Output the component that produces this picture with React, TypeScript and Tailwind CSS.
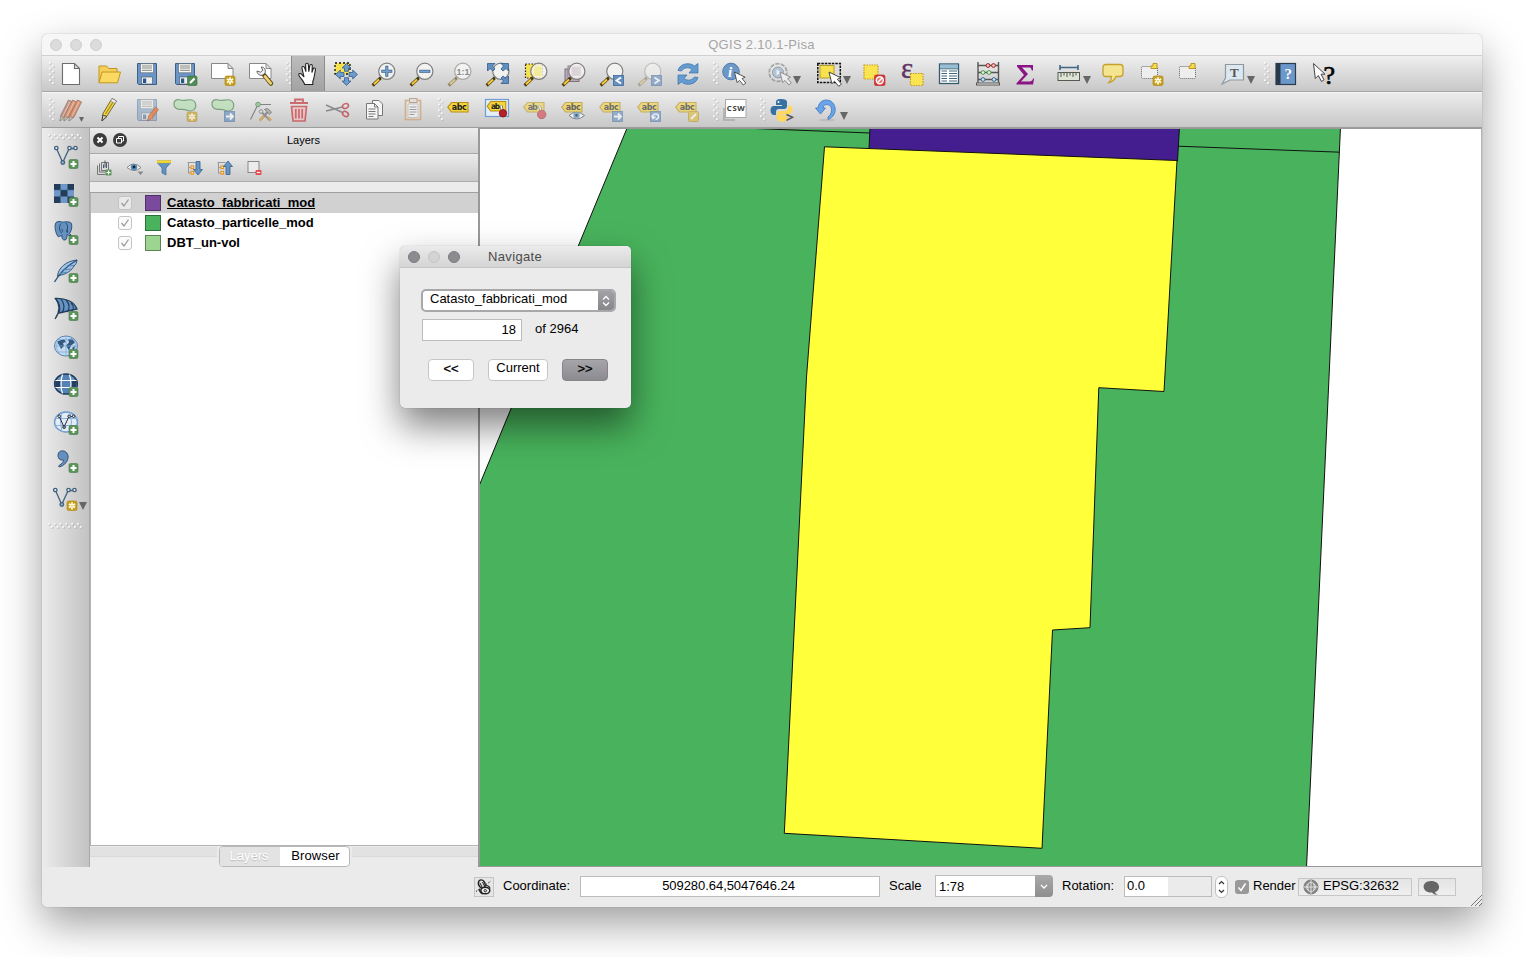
import React from "react";
import type { ReactNode } from "react";

type IconProps = { name: string; className?: string };

const Glass = ({ faded = false }: { faded?: boolean }) => (
  <g>
    <path d="M9.500 14.500 7.500 16.500" stroke={faded ? "#888" : "#333"} strokeWidth="2" />
    <path d="M7.500 17 1.800 22.400" stroke={faded ? "#8d8468" : "#4a3d12"} strokeWidth="3.2" strokeLinecap="square" />
    <path d="M7 17.500 2 22.200" stroke={faded ? "#dcc98a" : "#fbcb35"} strokeWidth="2" />
    <circle cx="14.800" cy="9.300" r="8.100" fill="#f6f6f4" fillOpacity="0.8" stroke={faded ? "#a8a8a8" : "#808080"} strokeWidth="1.2" />
  </g>
);

const Plus = () => (
  <g>
    <rect x="15" y="14.5" width="9" height="9" rx="1.5" fill="#5b955b" stroke="#447744" strokeWidth="0.6" />
    <path d="M19.5 16v6M16.5 19h6" stroke="#fff" strokeWidth="2" />
  </g>
);

const Star = () => (
  <g>
    <rect x="14" y="14" width="10" height="9.5" rx="1.6" fill="#c9a01f" stroke="#a9830f" strokeWidth="0.6" />
    <path d="M19 15.2v7.200M15.9 17l6.2 3.6M22.1 17l-6.2 3.6" stroke="#fffbe6" strokeWidth="1.7" />
    <circle cx="19" cy="18.8" r="0.800" fill="#d9b541" />
  </g>
);

const BlueBox = ({ children }: { children: ReactNode }) => (
  <g>
    <rect x="13.5" y="13.5" width="10" height="10" fill="#6690c2" stroke="#41699c" strokeWidth="0.8" />
    {children}
  </g>
);

const Cursor = ({ x = 12, y = 10 }: { x?: number; y?: number }) => (
  <path
    transform={`translate(${x} ${y})`}
    d="M0 0 2.6 10.6 5 8.4 8.8 13 11.3 11 7.6 6.6 10.6 5.2Z"
    fill="#fff"
    stroke="#444"
    strokeWidth="0.9"
  />
);

const Tag = ({ text = "abc" }: { text?: string }) => (
  <g>
    <path d="M0.800 9.200 4.500 4.500h16.500v9.500H4.500Z" fill="#f4d43c" stroke="#b78f13" strokeWidth="1.1" />
    <text x="4.800" y="12.200" fontSize="8" fontWeight="700" fontFamily="DejaVu Sans" textLength={text.length * 5} fill="#222">
      {text}
    </text>
  </g>
);

const Floppy = () => (
  <g>
    <path d="M2.5 1.5h19v21h-18l-1-1Z" fill="#6b95c6" stroke="#3e5f86" />
    <rect x="5.5" y="1.8" width="13" height="9" fill="#f7f7f3" stroke="#65717c" strokeWidth="0.7" />
    <path d="M7 4h10M7 6h10M7 8.3h10" stroke="#777" strokeWidth="0.9" />
    <rect x="6.5" y="15" width="11" height="7" fill="#eee" stroke="#456" strokeWidth="0.6" />
    <rect x="8" y="16.5" width="3.2" height="4.5" fill="#28558c" />
  </g>
);

const Blob = () => (
  <path d="M1 6.500C.5 2.500 3.500 1 7.500 2 11 3.500 15 .8 19 2c4 1.200 4.200 5 3.200 8-1.500 3.500-6 3.200-9 2-3-1-5-.2-8-.8C3 10.500 1.200 9 1 6.500Z" fill="#b3dfaf" stroke="#467f4d" strokeWidth="1.200" />
);

const Vector = ({ stroke = "#42617f" }: { stroke?: string }) => (
  <g fill="#e9eef3" stroke={stroke} strokeWidth="1.3">
    <path d="M2.5 3.5 8.7 17.5 15.2 3.5H20" fill="none" />
    <circle cx="2.3" cy="3" r="1.7" />
    <circle cx="8.8" cy="17.5" r="1.8" fill="#90afcf" />
    <circle cx="15.5" cy="3" r="1.7" />
    <circle cx="21.5" cy="3" r="1.7" />
  </g>
);

const icons: Record<string, ReactNode> = {
  file: <path d="M3.5 1.5h12l5 5v16h-17ZM15.5 1.5v5h5" fill="#fff" stroke="#6d6d6d" strokeWidth="1.1" />,
  folder: (
    <g stroke="#c3961d">
      <path d="M2 20.500V4h7.500L11.500 6.500H20V10" fill="#f5cf5a" />
      <path d="M2 20.800 5 10h18.500l-3 10.800Z" fill="#fad962" />
    </g>
  ),
  save: <Floppy />,
  saveAs: (
    <g>
      <Floppy />
      <rect x="14.5" y="14" width="9.5" height="9.5" rx="1.5" fill="#4f8b54" stroke="#336a3b" strokeWidth="0.6" />
      <path d="m17 21 4.5-4.5" stroke="#fff" strokeWidth="2.2" />
    </g>
  ),
  composer: (
    <g>
      <path d="M0.500 1.500H17l5 5v10H0.500ZM17 1.500v5h5" fill="#fff" stroke="#888" />
      <Star />
    </g>
  ),
  manager: (
    <g>
      <path d="M0.500 1.500H17l5 5v10H0.500ZM17 1.500v5h5" fill="#fff" stroke="#888" />
      <path d="m15 13 7 8.500" stroke="#5b4a16" strokeWidth="4.4" strokeLinecap="round" />
      <path d="m16 14.500 5.800 6.800" stroke="#efd272" strokeWidth="2.7" strokeLinecap="round" />
      <path d="M8 9c0 3.500 3.500 5 6 4l2-1.800c1-2.500 0-6.200-3.800-6.200l1.600 3.200-2.300 2Z" fill="#eee" stroke="#555" strokeWidth="0.9" />
    </g>
  ),
  hand: (
    <path
      d="M8.500 22.500c-.2-3-4.700-6.700-5.600-9.300-.5-1.800 1.500-2.300 2.800-.8L8 15 6 6.300c-.4-2 2-2.500 2.600-.6l1.300 4-.3-7c0-2 2.600-2 2.800 0l.4 6.900 1-6c.4-1.800 2.800-1.400 2.500.5l-.4 6.400 1.200-3.500c.6-1.700 2.700-1 2.300.8-.9 4.500-1.200 9-2.600 11.500v3.200Z"
      fill="#fff"
      stroke="#222"
      strokeWidth="1.1"
    />
  ),
  panSel: (
    <g>
      <rect x="1" y="1" width="15" height="11" fill="#f7e14f" stroke="#111" strokeWidth="1.3" strokeDasharray="2 2" />
      <path
        d="m12.500 1.500 4.500 4.500h-2.500v3.300h-4V6H8ZM12.500 23.500 17 19h-2.500v-3.300h-4V19H8ZM1.500 12.500l4.800-4.500v2.500H10v4H6.300V17ZM23.500 12.500l-4.800-4.500v2.500H15v4h3.700V17Z"
        fill="#6d9ccd"
        stroke="#365f8e"
        strokeWidth="0.8"
      />
    </g>
  ),
  zoomIn: (
    <g>
      <Glass />
      <path d="M14.800 3.800v11M9.300 9.300h11" stroke="#3c638f" strokeWidth="3" />
      <path d="M14.800 4.500v9.600M10 9.300h9.600" stroke="#76a2d2" strokeWidth="1.6" />
    </g>
  ),
  zoomOut: (
    <g>
      <Glass />
      <path d="M9.300 9.300h11" stroke="#3c638f" strokeWidth="3" />
      <path d="M10 9.300h9.600" stroke="#76a2d2" strokeWidth="1.6" />
    </g>
  ),
  zoomNative: (
    <g>
      <Glass faded />
      <text x="8.500" y="12.500" fontSize="9" fontWeight="700" fontFamily="Liberation Sans" fill="#8a8a8a">1:1</text>
    </g>
  ),
  zoomFull: (
    <g>
      <Glass />
      <path d="M1.500 1.500H9L6.500 4 9 7 7 9 4 6.500 1.500 9ZM22.500 1.500H15L17.500 4 15 7l2 2 3-2.500 2.500 2.500ZM22.500 21.500H15l2.500-2.500L15 16l2-2 3 2.500 2.500-2.500Z" fill="#618fc1" stroke="#315a8b" strokeWidth="0.8" />
    </g>
  ),
  zoomSel: (
    <g>
      <rect x="1.500" y="2" width="17" height="14" fill="#f7e14f" stroke="#222" strokeWidth="1.2" strokeDasharray="1.5 1.5" />
      <Glass />
      <path d="M11 4.500h6.500v9.500H9.500Z" fill="#f1e88c" opacity="0.8" />
    </g>
  ),
  zoomLayer: (
    <g>
      <rect x="3" y="7" width="14" height="12.500" fill="#b9a8ba" stroke="#81717f" />
      <rect x="6" y="4" width="13" height="12" fill="#d4c8d4" stroke="#93818f" />
      <Glass />
      <rect x="9.500" y="5" width="9" height="9" fill="#d6cbd5" opacity="0.8" />
    </g>
  ),
  zoomLast: (
    <g>
      <Glass />
      <BlueBox><path d="m21 15.500-4.500 3 4.500 3" stroke="#fff" strokeWidth="1.8" fill="none" /></BlueBox>
    </g>
  ),
  zoomNext: (
    <g opacity="0.6">
      <Glass faded />
      <BlueBox><path d="m16.500 15.500 4.500 3-4.500 3" stroke="#fff" strokeWidth="1.8" fill="none" /></BlueBox>
    </g>
  ),
  refresh: (
    <g fill="#649bd1" stroke="#3a70a9" strokeWidth="0.7">
      <path d="M2 8.500C4 1 14 0 18.500 4L22 1.500V11h-9l3-3.500C12.500 4.800 8 5.500 5.500 9Z" />
      <path d="M22 15.500C20 23 10 24 5.500 20L2 22.500V13h9l-3 3.500c3.500 2.700 8 2 10.500-1.500Z" />
    </g>
  ),
  identify: (
    <g>
      <circle cx="9" cy="9.5" r="8.3" fill="#6c98c9" stroke="#507baa" />
      <text x="6" y="15" fontSize="15" fontStyle="italic" fontWeight="700" fontFamily="Liberation Serif" fill="#fff">i</text>
      <Cursor x={12.5} y={10} />
    </g>
  ),
  action: (
    <g opacity="0.55">
      <circle cx="11" cy="10.5" r="8.800" fill="#e6e6e6" stroke="#777" strokeWidth="1.800" strokeDasharray="4.200 1.300" />
      <circle cx="11" cy="10.5" r="5.5" fill="#8fb0d2" stroke="#567" />
      <path d="m9.500 7.500 4.500 3-4.500 3Z" fill="#fff" />
      <Cursor x={13} y={10} />
    </g>
  ),
  select: (
    <g>
      <rect x="0.8" y="1.500" width="22.500" height="19" fill="#ddd" stroke="#111" strokeWidth="1.5" strokeDasharray="2.5 1" />
      <rect x="3" y="3.5" width="14" height="12.5" fill="#f7e14f" stroke="#b99c22" />
      <g transform="translate(12 10) scale(1.100)"><Cursor x={0} y={0} /></g>
    </g>
  ),
  deselect: (
    <g>
      <rect x="2" y="3" width="14" height="14" fill="#fbe451" stroke="#c69c21" strokeWidth="1.2" strokeDasharray="1.5 1" />
      <rect x="12.500" y="13" width="10.5" height="10.5" rx="1.5" fill="#d83b3b" stroke="#bb2020" strokeWidth="0.6" />
      <circle cx="17.8" cy="18.2" r="3.5" fill="#e87878" stroke="#fff" strokeWidth="1.4" />
      <path d="m15.500 20.700 4.700-5" stroke="#fff" strokeWidth="1.3" />
    </g>
  ),
  expr: (
    <g>
      <text x="1" y="16" fontSize="29" fontFamily="Liberation Serif" fill="#5f3563" stroke="#5f3563" strokeWidth="0.400">ε</text>
      <rect x="10.5" y="11.5" width="12.5" height="12" fill="#fbe451" stroke="#c69c21" strokeWidth="1.2" strokeDasharray="1.5 1" />
    </g>
  ),
  table: (
    <g>
      <rect x="1.500" y="2" width="19" height="19.5" fill="#fff" stroke="#35596f" strokeWidth="1.3" />
      <path d="M2 4.500h18" stroke="#96bfd7" strokeWidth="3.5" />
      <path d="M3.500 9h5.500M11 9h8M3.500 11.500h5.500M11 11.500h8M3.500 14h5.500M11 14h8M3.500 16.500h5.500M11 16.500h8M3.500 19h5.500M11 19h8M1.500 6.800h19" stroke="#40677d" />
    </g>
  ),
  abacus: (
    <g>
      <path d="M2 0v23M22.500 0v23M2 3.500h20M2 10.500h20M2 17.500h20" stroke="#555" strokeWidth="1.400" />
      <rect x="0.500" y="21" width="23" height="2" fill="#eee" stroke="#555" />
      <g stroke="#9f2222" fill="#f7bfbf"><circle cx="12" cy="3.5" r="1.900" /><circle cx="17.500" cy="3.5" r="1.900" /></g>
      <g stroke="#50934f" fill="#d8f5d0"><circle cx="7" cy="10.5" r="1.900" /><circle cx="13" cy="10.5" r="1.900" /></g>
      <g stroke="#376a91" fill="#c5e2f6"><circle cx="7" cy="17.5" r="1.900" /><circle cx="18" cy="17.5" r="1.900" /></g>
    </g>
  ),
  sigma: <path d="M3 3h16v5.500h-1.200c-.6-2.500-1.300-3-3-3H8l6 6.500-7 7.500h8.500c2 0 2.800-.8 3.600-3h1l-1 6H2.500v-1.300l7.500-8.200-7-8.500Z" fill="#8a1685" />,
  measure: (
    <g>
      <path d="M3 5.500h18M3 3v5M21 3v5" stroke="#3f6682" strokeWidth="1.6" />
      <rect x="1" y="10.500" width="21.500" height="8" fill="#dfe5d5" stroke="#555b50" />
      <path d="M4 11v4M7 11v2.500M10 11v4M13 11v2.500M16 11v4M19 11v2.500" stroke="#555" />
    </g>
  ),
  tips: (
    <path d="M5 2.500h14c2 0 3 1 3 3v6c0 2-1 3-3 3h-4c-1 3-3 5-7 6 2-2 2.500-3.500 2.500-6H5c-2 0-3-1-3-3v-6c0-2 1-3 3-3Z" fill="#f5e590" stroke="#c4a02d" strokeWidth="1.300" />
  ),
  newBookmark: (
    <g>
      <rect x="2.500" y="4.500" width="16" height="12" rx="1" fill="#eee" stroke="#666" strokeDasharray="1 1" />
      <path d="M14 1.500h4v5h-6V4h2Z" fill="#f9de4c" stroke="#bc9521" />
      <Star />
    </g>
  ),
  bookmarks: (
    <g>
      <rect x="2.500" y="4.500" width="16" height="12" rx="1" fill="#eee" stroke="#666" strokeDasharray="1 1" />
      <path d="M14 1.500h4v5h-6V4h2Z" fill="#f9de4c" stroke="#bc9521" />
    </g>
  ),
  annotate: (
    <g>
      <path d="M4.500 2.500h18v15.500H9l-8 4 3.500-6Z" fill="#dce7f0" stroke="#8d999f" strokeWidth="1.2" />
      <text x="9" y="15" fontSize="13" fontWeight="700" fontFamily="Liberation Serif" fill="#555">T</text>
    </g>
  ),
  help: (
    <g>
      <rect x="2" y="1.500" width="19.500" height="21" fill="#6b97ca" stroke="#2b3c4d" strokeWidth="1.2" />
      <path d="M2 1.500h4.500v21H2Z" fill="#28394b" />
      <text x="10.500" y="17" fontSize="15" fontWeight="700" fontFamily="Liberation Serif" fill="#fff">?</text>
    </g>
  ),
  whats: (
    <g>
      <path d="m1.500 1.500 1.800 15 3-3 3.200 6 2.500-1.700-3-5.600h4Z" fill="#fff" stroke="#444" />
      <text x="11.500" y="22" fontSize="26" fontFamily="Liberation Serif" fill="#050505" stroke="#050505" strokeWidth="0.700">?</text>
    </g>
  ),
  edits: (
    <g opacity="0.65">
      {[0, 4, 9].map((x) => (
        <g key={x}>
          <path d={`M${x + 2} 23 ${x + 3} 17 ${x + 10.5} 2l4 2-7.500 15Z`} fill={x === 0 ? "#b47965" : "#e0703c"} stroke="#7d5040" />
          <path d={`M${x + 5} 18 ${x + 12} 4`} stroke="#f0b490" />
          <path d={`M${x + 2} 23 ${x + 2.7} 18.5 ${x + 6} 20Z`} fill="#c8bba8" stroke="#666" strokeWidth="0.600" />
        </g>
      ))}
    </g>
  ),
  pencil: (
    <g>
      <path d="m5 23 1-7.500 9-15L19.500 3 10 18Z" fill="#f2d941" stroke="#6e6437" />
      <path d="m8.500 16 8.500-13.500" stroke="#a88e20" strokeWidth="1.300" />
      <path d="m5 23 .8-6 4.200 1.500Z" fill="#d8cbb0" stroke="#444" />
      <path d="m15 .5 4.500 2.500L18 5.500 13.500 3Z" fill="#eee" stroke="#777" strokeWidth="0.6" />
    </g>
  ),
  saveEdits: (
    <g>
      <g opacity="0.45"><Floppy /></g>
      <path d="m12.500 23 1-5 7-9 3 2.500-7 9.500Z" fill="#e5824d" stroke="#a66b4c" strokeWidth="0.8" opacity="0.85" />
    </g>
  ),
  addFeature: <g opacity="0.65"><Blob /><Star /></g>,
  moveFeature: (
    <g opacity="0.65"><Blob /><BlueBox><path d="M15 18.500h7M19 15.500l3 3-3 3" stroke="#fff" strokeWidth="1.8" fill="none" /></BlueBox></g>
  ),
  nodeTool: (
    <g opacity="0.75">
      <path d="M1.500 21.500 9 6.500h13" stroke="#666" strokeWidth="1.1" fill="none" />
      <circle cx="9" cy="6.500" r="2.3" fill="#8cc18d" stroke="#528658" />
      <path d="m12 21.500 7-8M12 13.500l9 9" stroke="#777" strokeWidth="2" />
      <path d="m10.500 22.500 4.500-4.500M19 19l3 3.500" stroke="#c89c4c" strokeWidth="2.600" />
      <path d="m15.500 11.500 3-1 4 3.500-2 2.500-2-2.500Z" fill="#aaa" stroke="#666" />
      <circle cx="12" cy="13.500" r="1.800" fill="#ddd" stroke="#777" />
    </g>
  ),
  trash: (
    <g fill="none" stroke="#c9575c" opacity="0.85">
      <path d="M3 5h18M8 4.500V1.500h8V4.500" strokeWidth="1.800" />
      <path d="M4.500 8.500h15l-1.500 14.500H6Z" fill="#ecc2c3" strokeWidth="1.7" />
      <path d="M8.800 11v9.500M12 11v9.500M15.200 11v9.500" strokeWidth="1.7" />
    </g>
  ),
  cut: (
    <g fill="none" opacity="0.8">
      <path d="M1 7 17.500 14.500M1 13l16.500-4" stroke="#777" strokeWidth="1.400" />
      <ellipse cx="20.500" cy="8" rx="3.100" ry="2.3" transform="rotate(-25 20.500 8)" stroke="#bd464e" strokeWidth="1.500" />
      <ellipse cx="20.500" cy="16" rx="3.100" ry="2.3" transform="rotate(35 20.500 16)" stroke="#bd464e" strokeWidth="1.500" />
    </g>
  ),
  copy: (
    <g fill="#f6f6f6" stroke="#777">
      <path d="M9.500 2.500h6.500l3.500 3.500v11.500H9.500Z" />
      <path d="M3.500 5.500h8l3.500 3.500v12H3.500Z" />
      <path d="M11.500 5.500V9H15M5.500 11h7M5.500 13.500h7M5.500 16h7M5.500 18.500h5" fill="none" />
    </g>
  ),
  paste: (
    <g opacity="0.75">
      <rect x="4.500" y="2.500" width="15" height="19" fill="#eee5d9" stroke="#caa37a" strokeWidth="1.7" />
      <rect x="8.500" y="0.500" width="7.500" height="4" fill="#ddd" stroke="#b08f72" />
      <path d="M7 6h10v13.500H7Z" fill="#f4f4f4" stroke="#bbb" />
      <path d="M8.500 9h7M8.500 11.500h7M8.500 14h7M8.500 16.500h5" stroke="#888" />
    </g>
  ),
  label: <Tag />,
  labelPin: (
    <g>
      <rect x="0.500" y="1.500" width="23" height="17" fill="#e5edf5" stroke="#6d9ed3" strokeWidth="1.2" />
      <g transform="translate(1.500 -1) scale(0.920 1)"><Tag text="ab" /></g>
      <path d="m16 7.500 1.500 6" stroke="#555" strokeWidth="2.800" />
      <path d="m16 7.500 1.500 6" stroke="#f4f4f4" strokeWidth="1.500" />
      <circle cx="18" cy="15.300" r="3.700" fill="#b91f29" stroke="#8c1821" />
    </g>
  ),
  labelHold: (
    <g opacity="0.55">
      <Tag text="ab" />
      <path d="m16.500 7.500 1.500 6" stroke="#555" strokeWidth="2.800" />
      <path d="m16.500 7.500 1.500 6" stroke="#f4f4f4" strokeWidth="1.500" />
      <circle cx="18.700" cy="16.500" r="4.200" fill="#d72f39" stroke="#9c2329" />
    </g>
  ),
  labelShow: (
    <g opacity="0.65"><Tag /><path d="M8 17.500q7-6.500 15.500 0-8 7-15.500 0Z" fill="#fff" stroke="#456" /><circle cx="15.500" cy="17.200" r="3.200" fill="#6294be" /><circle cx="15.500" cy="17.200" r="1.200" fill="#123" /></g>
  ),
  labelMove: (
    <g opacity="0.6"><Tag /><BlueBox><path d="M15 18.500h7M19 15.500l3 3-3 3" stroke="#fff" strokeWidth="1.8" fill="none" /></BlueBox></g>
  ),
  labelRotate: (
    <g opacity="0.6"><Tag /><BlueBox><path d="M18.500 21.500c4-1 4-5.500 0-5.500-2.500 0-3 2-2.500 3.500M14.500 17.500l1.500 3 2.500-2" stroke="#fff" strokeWidth="1.500" fill="none" /></BlueBox></g>
  ),
  labelEdit: (
    <g opacity="0.6"><Tag /><rect x="13.500" y="13.500" width="10" height="10" rx="1" fill="#dfbd3a" stroke="#bc9521" /><path d="m16 21 5-5" stroke="#fff" strokeWidth="2" /></g>
  ),
  csw: (
    <g>
      <path d="M1 10v12h11" fill="none" stroke="#aaa" strokeWidth="1.500" />
      <rect x="2.500" y="1.500" width="20.500" height="18" fill="#fff" stroke="#aaa" />
      <text x="3.800" y="13" fontSize="7.700" fontWeight="700" fontFamily="Noto Sans" textLength="18" fill="#3a3a3a">CSW</text>
    </g>
  ),
  python: (
    <g>
      <path d="M11 1c-5 0-5 2-5 3.500V7h6v1H4c-2.500 0-3.500 2-3.500 4.500S2 17 4 17h2v-3c0-2 1-3 3-3h5c2 0 3-1 3-3V4c0-2-2-3-6-3Z" fill="#3671a3" />
      <path d="M12 23.500c5 0 5-2 5-3.500V17h-6v-1h8c2 0 3.500-2 3.500-4.500S21 7.500 19 7.500h-1V10c0 2-1 3-3 3H10c-2 0-3 1-3 3v4.500c0 2 2 3 5 3Z" fill="#ffd75a" />
      <circle cx="8.500" cy="4" r="1" fill="#fff" />
      <path d="m16.500 16.500 6 2.800-6 3" fill="none" stroke="#555" strokeWidth="1.500" />
    </g>
  ),
  undo: (
    <g>
      <ellipse cx="13" cy="22" rx="8" ry="1.300" fill="#bdbdbd" />
      <path d="M14 21.500c11-4 8.500-19.500-1.500-19.500C7.500 2 4.500 5.500 4 10H1.500l5 6 5-6H9C9.500 4.800 18 5.500 17.500 12.500c0 2.500-1.500 5-3.500 6.500Z" fill="#69a4ea" stroke="#3d73bd" strokeWidth="0.8" />
    </g>
  ),
  vector: <g><Vector /><Plus /></g>,
  raster: (
    <g>
      <rect x="0" y="1" width="20" height="19" fill="#6e98c8" />
      <path d="M0 1h6.500v6H0ZM13.500 1H20v6h-6.500ZM6.500 7h7v6.500h-7ZM0 13.500h6.500V20H0ZM13.500 13.500H20V20h-6.500Z" fill="#233c57" />
      <path d="M6.500 1v19M13.500 1v19M0 7h20M0 13.500h20" stroke="#486b91" strokeWidth="0.5" />
      <Plus />
    </g>
  ),
  postgis: (
    <g>
      <path d="M2 1.500c3-2 5-.5 7-.3 3-.7 7-.7 8.500 1.300 1 4-.5 8-2 10l2 2h-3c-.5-1-1.500-1-1.500-1 .2 2 0 5-2 5.500-2.500.2-3.200-1.500-3.200-5C6 15.500 5 16 4 15.500 1.500 12 0 5 2 1.500Z" fill="#6491c0" stroke="#2c5178" />
      <path d="M7 2.500c-2 3-2 6 0 9M12 2c2 2 2 6 .5 9M7.500 8c2 1 1 3-.5 4M12 9c2 0 2 2 1 3" fill="none" stroke="#294d73" />
      <Plus />
    </g>
  ),
  feather: (
    <g>
      <path d="M3.500 17.500C4 9 12 2 23 1c-.5 3-1 4.500-3 6C18 11 13 15 7 16Z" fill="#9fc2e3" stroke="#315b85" />
      <path d="M.5 23C5 15 11 8 23 1" fill="none" stroke="#2d5379" strokeWidth="1.400" />
      <path d="M6 14.500l7-1.500M9 11l8-1M13 7l7-.5" fill="none" stroke="#5683b1" />
      <Plus />
    </g>
  ),
  mssql: (
    <g>
      <path d="M1.500 1.500C12 1 20 5 23 12L5 16C7 10 5.500 6 1.500 1.500Z" fill="#6593c3" stroke="#243f5c" strokeWidth="1.300" />
      <path d="M1 22C6 15 6.500 8 1.500 1.500M7 2c4 5 4 9 1 14M12 3c4 4 4 9 1 12M17 6c3 3 3 6 1 8" fill="none" stroke="#243f5c" strokeWidth="1.200" />
      <Plus />
    </g>
  ),
  wms: (
    <g>
      <ellipse cx="12" cy="11" rx="11.500" ry="10" fill="#c3daf0" stroke="#5686b7" />
      <path d="M3 6.500 10 4l2 3-3 1 1 3-3 3-2-4ZM14 4l4-.5 3 4-4 3-2 5-3-5 3-3ZM18 13l3-2-1 5Z" fill="#34587e" />
      <path d="M1 11h22M12 1v20M4 4.500h16M4 17h16M5 3q-5 8 0 16M19 3q5 8 0 16" fill="none" stroke="#7fa9d2" strokeWidth="0.700" />
      <Plus />
    </g>
  ),
  wcs: (
    <g>
      <ellipse cx="12" cy="11" rx="11.300" ry="10" fill="#6a98cb" stroke="#213c5b" strokeWidth="1.600" />
      <path d="M2 7.500 1 14h4.500L8 20h8l2.500-6H23l-1-6.500h-4L15.500 2h-7L6 7.500Z" fill="#5482b6" />
      <path d="M1.500 8H7v6H1ZM17 8h5.500v6H17Z" fill="#243f60" />
      <path d="M1.500 7.500h21M1.500 14.500h21M8.500 1.500Q5.500 11 8.500 20.500M15.500 1.500q3 9.500 0 19" fill="none" stroke="#fff" strokeWidth="1.200" />
      <Plus />
    </g>
  ),
  wfs: (
    <g>
      <ellipse cx="12" cy="11" rx="11.500" ry="10" fill="#e4edf5" stroke="#6b9bd0" strokeWidth="1.400" />
      <path d="M1 7.500h22M1 14.500h22M8 1Q5 11 8 21M16 1q3 10 0 20" fill="none" stroke="#8eb1d7" />
      <g transform="translate(3.500 3) scale(.75)"><Vector stroke="#1c2938" /></g>
      <Plus />
    </g>
  ),
  comma: (
    <g>
      <path d="M4 6.500C4 2 8 1 11 2.500c6 3 3 13-5.500 15.500l-1-1C8.500 14 9.500 13 9.500 11 5.500 11.500 4 9 4 6.500Z" fill="#648fbe" stroke="#315475" />
      <Plus />
    </g>
  ),
  newShape: <g><Vector /><Star /></g>,
};

const Icon = ({ name, className = "h-6 w-6" }: IconProps) => (
  <svg viewBox="0 0 24 24" fill="none" className={`shrink-0 overflow-visible ${className}`}>{icons[name]}</svg>
);

const Caret = ({ className = "h-2 w-2" }: { className?: string }) => (
  <svg viewBox="0 0 8 8" className={`shrink-0 ${className}`}><path d="M0 0h8L4 8Z" fill="#666" /></svg>
);

const dots = [0, 1, 2, 3, 4, 5, 6, 7];

const Grip = () => (
  <svg viewBox="0 0 6 24" className="h-6 w-1.5 shrink-0">
    {dots.map((i) => (
      <g key={i}>
        <rect x={(i % 2) * 3 + 0.7} y={i * 2.9 + 0.7} width="1.8" height="1.8" fill="#b3b3b3" />
        <rect x={(i % 2) * 3} y={i * 2.9} width="1.8" height="1.8" fill="#fafafa" />
      </g>
    ))}
  </svg>
);

const SideGrip = () => (
  <svg viewBox="0 0 36 6" className="h-1.5 w-9 shrink-0">
    {Array.from({ length: 12 }, (_, i) => (
      <g key={i}>
        <rect x={i * 2.9 + 0.7} y={(i % 2) * 3 + 0.7} width="1.8" height="1.8" fill="#aaa" />
        <rect x={i * 2.9} y={(i % 2) * 3} width="1.8" height="1.8" fill="#fafafa" />
      </g>
    ))}
  </svg>
);

const Cells = ({ names, pressed }: { names: string[]; pressed?: string }) => (
  <>
    {names.map((n) => (
      <div key={n} className="flex h-full w-[38px] shrink-0 items-center justify-center">
        <div className={n === pressed ? "flex h-[35px] w-[34px] items-center justify-center border-x border-[#8d8d8d] bg-gradient-to-b from-[#bdbdbd] to-[#a2a2a2]" : "flex"}>
          <Icon name={n} />
        </div>
      </div>
    ))}
  </>
);

const Drop = ({ name, className }: { name: string; className: string }) => (
  <div className={`flex shrink-0 items-center ${className}`}>
    <Icon name={name} />
    <Caret className="mt-3 ml-0.5 h-2 w-2" />
  </div>
);

const GripSlot = ({ className = "w-[9px] pl-1.5" }: { className?: string }) => (
  <div className={`flex shrink-0 items-center ${className}`}><Grip /></div>
);

const MainBars = () => (
  <>
    <div className="flex h-9 shrink-0 items-center border-b border-[#a8a8a8] bg-gradient-to-b from-[#efefef] to-[#c8c8c8]">
      <GripSlot className="w-2.5 pl-[7px]" />
      <Cells names={["file", "folder", "save", "saveAs", "composer", "manager"]} />
      <GripSlot />
      <Cells pressed="hand" names={["hand", "panSel", "zoomIn", "zoomOut", "zoomNative", "zoomFull", "zoomSel", "zoomLayer", "zoomLast", "zoomNext", "refresh"]} />
      <GripSlot className="w-2 pl-1.5" />
      <Cells names={["identify"]} />
      <Drop name="action" className="w-[52px] pl-[14px]" />
      <Drop name="select" className="w-[50px] pl-3" />
      <Cells names={["deselect", "expr", "table", "abacus", "sigma"]} />
      <Drop name="measure" className="w-[49px] pl-3" />
      <Cells names={["tips", "newBookmark", "bookmarks"]} />
      <Drop name="annotate" className="w-[50px] pl-[13px]" />
      <GripSlot />
      <Cells names={["help", "whats"]} />
    </div>
    <div className="flex h-9 shrink-0 items-center border-t border-b border-t-[#f4f4f4] border-b-[#9c9c9c] bg-gradient-to-b from-[#ececec] to-[#c8c8c8]">
      <GripSlot className="w-2.5 pl-[7px]" />
      <div className="flex w-[38px] shrink-0 items-center pl-1.5">
        <Icon name="edits" />
        <Caret className="mt-[18px] -ml-1 h-[5px] w-[7px]" />
      </div>
      <Cells names={["pencil", "saveEdits", "addFeature", "moveFeature", "nodeTool", "trash", "cut", "copy", "paste"]} />
      <GripSlot className="w-2 pl-1.5" />
      <Cells names={["label", "labelPin", "labelHold", "labelShow", "labelMove", "labelRotate", "labelEdit"]} />
      <GripSlot className="w-2.5 pl-[7px]" />
      <Cells names={["csw"]} />
      <GripSlot />
      <Cells names={["python"]} />
      <Drop name="undo" className="w-[50px] pl-[13px]" />
    </div>
  </>
);

const SideBar = () => (
  <div className="flex w-12 shrink-0 flex-col items-center border-r border-[#a9a9a9] bg-gradient-to-r from-[#ececec] to-[#c3c3c3] pt-1.5">
    <SideGrip />
    {["vector", "raster", "postgis", "feather", "mssql", "wms", "wcs", "wfs", "comma"].map((n) => (
      <div key={n} className="flex h-[38px] shrink-0 items-center justify-center pb-1"><Icon name={n} /></div>
    ))}
    <div className="flex h-[38px] shrink-0 items-center pb-1 pl-2">
      <Icon name="newShape" />
      <Caret className="mt-3.5 ml-0.5 h-2 w-2" />
    </div>
    <div className="pt-[3px]"><SideGrip /></div>
  </div>
);

const layers = [
  { name: "Catasto_fabbricati_mod", swatch: "bg-[#7a4a9c] border-[#513068]", row: "bg-[#d1d1d1]", text: "underline" },
  { name: "Catasto_particelle_mod", swatch: "bg-[#48b35c] border-[#2c6e39]", row: "bg-white", text: "" },
  { name: "DBT_un-vol", swatch: "bg-[#9cd590] border-[#5e8356]", row: "bg-white", text: "" },
];

const LayerToolbar = () => (
  <div className="flex h-7 shrink-0 items-center gap-3.5 border-b border-[#adadad] bg-gradient-to-b from-[#ececec] to-[#cacaca] pl-1.5">
    <svg viewBox="0 0 16 16" fill="none" className="h-4 w-4">
      <path d="M1.500 5.500v9h8M3.500 3.500v8.500h7M5.500 2.500h7v8h-7Z" stroke="#777" />
      <path d="M9 .5v7M7.500 4.500V8M10.500 3v5" stroke="#46576b" />
      <rect x="9.500" y="9.500" width="6" height="6" rx="1" fill="#5b955b" /><path d="M12.500 10.500v4M10.500 12.500h4" stroke="#fff" strokeWidth="1.2" />
    </svg>
    <svg viewBox="0 0 18 16" fill="none" className="h-4 w-[18px]">
      <path d="M1 7.500q6.500-7 14 0-7 6-14 0Z" fill="#f2f2f2" stroke="#888" /><circle cx="8" cy="7.200" r="3.300" fill="#5d8db5" /><circle cx="8" cy="7" r="1.400" fill="#123" /><path d="M11.500 11.500h6L14.500 15Z" fill="#888" />
    </svg>
    <svg viewBox="0 0 14 16" className="-ml-px h-4 w-3.5">
      <path d="M0 2.500h14L9 8v7l-4-2V8Z" fill="#6492c4" stroke="#426b96" strokeWidth="0.7" /><path d="M0 .5h14v2.500H0Z" fill="#f3dc36" stroke="#c5a520" strokeWidth="0.5" />
    </svg>
    {[false, true].map((up) => (
      <svg key={String(up)} viewBox="0 0 16 16" fill="none" className={up ? "h-4 w-4" : "ml-0.5 h-4 w-4"}>
        <path d="M0.500 2.500h8M1.500 2.500v11M1.500 7.500h2M1.500 13h2" stroke="#999" />
        <rect x="4" y="6" width="2.500" height="2.500" fill="#fff" stroke="#e8921f" strokeWidth="1.200" />
        <rect x="4" y="11.500" width="2.500" height="2.500" fill="#fff" stroke="#e8921f" strokeWidth="1.200" />
        <path d={up ? "M9 14.500V6.500H6.500L11 1l4.500 5.500H13v8Z" : "M9 1.500v8H6.500l4.500 5.500 4.500-5.500H13v-8Z"} fill="#6894c5" stroke="#345e8a" strokeWidth="0.8" />
      </svg>
    ))}
    <svg viewBox="0 0 16 16" fill="none" className="h-4 w-4"><rect x="1" y="1.500" width="11" height="11" fill="#ececec" stroke="#888" /><rect x="8.500" y="10" width="6" height="5" rx="1" fill="#e74950" /><path d="M9.800 12.500h3.400" stroke="#fff" strokeWidth="1.2" /></svg>
  </div>
);

const LayerPanel = () => (
  <div className="flex w-[388px] shrink-0 flex-col bg-[#ebebeb]">
    <div className="flex h-[26px] shrink-0 items-center gap-1.5 border-b border-[#a9a9a9] bg-gradient-to-b from-[#ededed] to-[#d0d0d0] pb-px pl-[3px]">
      <svg viewBox="0 0 14 14" className="h-3.5 w-3.5"><circle cx="7" cy="7" r="7" fill="#3b3b3b" /><path d="m4.500 4.500 5 5M9.500 4.500l-5 5" stroke="#fff" strokeWidth="2" /></svg>
      <svg viewBox="0 0 14 14" fill="none" className="h-3.5 w-3.5"><circle cx="7" cy="7" r="7" fill="#3b3b3b" /><path d="M5.500 5V3.500h5v4.500H9M3.500 5.500H8.500V10h-5Z" stroke="#fff" /></svg>
      <div className="flex-1 pr-1 text-center text-[11px] text-black">Layers</div>
    </div>
    <LayerToolbar />
    <div className="h-[11px] shrink-0 border-b border-[#a0a0a0]" />
    <div className="min-h-0 flex-1 border-b border-l border-[#b4b4b4] bg-white">
      {layers.map((l) => (
        <div key={l.name} className={`flex h-5 items-center pl-[27px] ${l.row}`}>
          <svg viewBox="0 0 14 14" fill="none" className="h-3.5 w-3.5"><rect x="0.500" y="0.500" width="13" height="13" rx="2.5" fill="#f8f8f8" fillOpacity="0.6" stroke="#c4c4c4" /><path d="m3.500 7 2.500 3 4.500-6.500" stroke="#999" strokeWidth="1.300" /></svg>
          <span className={`ml-[13px] h-4 w-4 border ${l.swatch}`} />
          <span className={`ml-1.5 text-[13px] font-bold leading-5 text-black ${l.text}`}>{l.name}</span>
        </div>
      ))}
    </div>
    <div className="flex h-[21px] shrink-0 items-start">
      <div className="mt-px h-2.5 w-[127px] border-b border-[#dadada] bg-[#e2e2e2]" />
      <div className="ml-0.5 flex h-[21px] w-[131px] overflow-hidden rounded border border-[#b9b9b9] bg-white text-[13px] leading-[18px]">
        <div className="w-[60px] bg-[#e3e3e3] pr-0.5 text-center text-white [text-shadow:0_1px_1px_#bbb]">Layers</div>
        <div className="flex-1 pl-0.5 text-center tracking-[0.1px] text-black">Browser</div>
      </div>
      <div className="mt-px ml-0.5 h-2.5 flex-1 border-b border-[#dadada] bg-[#e2e2e2]" />
    </div>
  </div>
);

const MapCanvas = () => (
  <div className="min-w-0 flex-1 border-t border-r border-b border-l-2 border-[#999] border-r-[#b5b5b5] bg-white">
    <svg viewBox="480 129 1001 737" preserveAspectRatio="none" className="block h-full w-full" strokeWidth="1" stroke="#111">
      <path d="M627.500 127H1340.500L1306.500 868H478V488.500Z" fill="#48b35c" />
      <path d="M755 128.500 870 133M1178 146.200 1340 152.200" fill="none" />
      <path d="M870 127H1179.500L1177.500 161 869 149Z" fill="#441e8e" />
      <path d="M824.500 146.800 1177 160.500 1164 391.500 1098.800 387.700 1090 627.700 1052.500 630 1042 848.300 784.300 833.300 806.500 377Z" fill="#ffff3a" />
    </svg>
  </div>
);

const StatusBar = () => (
  <div className="flex h-10 shrink-0 items-start rounded-b-[5px] bg-[#ebebeb] text-[13px] leading-[18px] text-black">
    <div className="mt-2.5 ml-[432px] flex h-5 w-5 items-center justify-center border border-[#c5c5c5] bg-[#e6e6e6]">
      <svg viewBox="0 0 16 16" fill="none" className="h-4 w-4" stroke="#222"><path d="M0 12.500 15 2" strokeDasharray="1.500 1.500" /><ellipse cx="5.800" cy="5" rx="3.200" ry="4.200" transform="rotate(-25 5.800 5)" fill="#ddd" strokeWidth="1.500" /><path d="M4 4 6 8M6.500 3l2 4" /><ellipse cx="9.300" cy="11.500" rx="4.500" ry="3.300" fill="#eee" strokeWidth="1.500" /><circle cx="9.300" cy="11.700" r="1.200" /><path d="M3 10q1 4 4 5M10 6.500q3.500 0 4 3" strokeWidth="1.200" /></svg>
    </div>
    <span className="mt-2.5 ml-[9px] w-[77px]">Coordinate:</span>
    <div className="mt-[9px] h-[21px] w-[300px] border border-[#bcbcbc] bg-white pr-[3px] text-center leading-[18px] tracking-[-0.05px]">509280.64,5047646.24</div>
    <span className="mt-2.5 ml-[9px] w-[46px]">Scale</span>
    <div className="mt-2 flex h-[22px] w-[118px]">
      <div className="flex-1 border border-r-0 border-[#bcbcbc] bg-white pl-[3px] leading-[21px]">1:78</div>
      <div className="flex w-[18px] items-center justify-center rounded-r bg-gradient-to-b from-[#a9a9a9] to-[#8e8e8e]"><svg viewBox="0 0 8 5" fill="none" className="h-[5px] w-2"><path d="m1 1 3 3 3-3" stroke="#fff" strokeWidth="1.300" /></svg></div>
    </div>
    <span className="mt-2.5 ml-[9px] w-[62px]">Rotation:</span>
    <div className="mt-[9px] flex h-[21px] w-[88px] border border-[#bcbcbc] bg-[#ebebeb]"><div className="w-[43px] bg-white pl-0.5 leading-[18px]">0.0</div></div>
    <div className="mt-[9px] ml-[3px] flex h-[22px] w-[13px] items-center justify-center rounded-md border border-[#c1c1c1] bg-white"><svg viewBox="0 0 7 14" fill="none" className="h-3.5 w-[7px]"><path d="m1 4 2.500-2.500L6 4M1 10l2.500 2.500L6 10" stroke="#333" strokeWidth="1.2" /></svg></div>
    <svg viewBox="0 0 14 14" fill="none" className="mt-[13px] ml-[7px] h-3.5 w-3.5"><rect width="14" height="14" rx="3" fill="#999" /><path d="m3.500 7.500 2.500 3 4.500-7" stroke="#fff" strokeWidth="1.500" /></svg>
    <span className="mt-2.5 ml-1 w-[45px]">Render</span>
    <div className="mt-[11px] flex h-[18px] w-[114px] items-center border border-[#c6c6c6] bg-gradient-to-b from-[#e4e4e4] to-[#efefef] pl-1">
      <svg viewBox="0 0 16 16" fill="none" className="h-4 w-4" stroke="#e0e0e0"><circle cx="8" cy="8" r="7" fill="#888" stroke="#777" /><circle cx="8" cy="8" r="4.500" /><path d="M1 8h14M8 1v14M5.500 4.500q-2 3.500 0 7M10.500 4.500q2 3.500 0 7" /></svg>
      <span className="-mt-0.5 ml-1 leading-4">EPSG:32632</span>
    </div>
    <div className="mt-[11px] ml-1.5 flex h-[18px] w-[38px] items-center border border-[#c6c6c6] bg-gradient-to-b from-[#e4e4e4] to-[#efefef] pl-1"><svg viewBox="0 0 16 15" className="h-[15px] w-4"><path d="M8 1c10 0 10 10 4 11 0 1 1 2 3 2.500-3 .5-5-.5-6-2C-2 13-2 1 8 1Z" fill="#666" /></svg></div>
    <svg viewBox="0 0 12 12" className="mt-auto mb-px ml-auto h-3 w-3"><path d="M1 12 12 1M5 12l7-7M9 12l3-3" stroke="#777" /></svg>
  </div>
);

const Navigate = () => (
  <div className="absolute top-[212px] left-[358px] flex h-[162px] w-[231px] flex-col rounded-[5px] bg-[#ebebeb] text-[13px] text-black shadow-[0_18px_36px_rgba(0,0,0,0.5),0_0_1px_rgba(0,0,0,0.4)]">
    <div className="flex h-[22px] shrink-0 items-center gap-2 rounded-t-[5px] border-b border-[#c4c4c4] bg-gradient-to-b from-[#ebebeb] to-[#d4d4d4] pl-2">
      <span className="h-3 w-3 rounded-full border border-[#7c7c80] bg-[#8c8c90]" />
      <span className="h-3 w-3 rounded-full border border-[#c4c4c4] bg-[#d3d3d3]" />
      <span className="h-3 w-3 rounded-full border border-[#7c7c80] bg-[#8c8c90]" />
      <span className="ml-5 tracking-[0.35px] text-[#4b4b4b]">Navigate</span>
    </div>
    <div className="mt-[21px] ml-[21px] flex h-[23px] w-[195px] overflow-hidden rounded-[5px] border-2 border-[#a8a8ab] bg-white">
      <span className="flex-1 pl-[7px] leading-[15px]">Catasto_fabbricati_mod</span>
      <span className="flex w-4 items-center justify-center bg-gradient-to-b from-[#a2a2a6] to-[#87878b]"><svg viewBox="0 0 8 12" fill="none" className="h-3 w-2"><path d="m1 4.500 3-3 3 3M1 7.500l3 3 3-3" stroke="#fff" strokeWidth="1.300" /></svg></span>
    </div>
    <div className="mt-[7px] ml-[22px] flex">
      <div className="h-[22px] w-[100px] border border-[#bcbcbc] bg-white pr-[5px] text-right leading-[19px]">18</div>
      <span className="ml-[13px] leading-5">of 2964</span>
    </div>
    <div className="mt-[18px] ml-7 flex h-[22px] text-center leading-[17px]">
      <div className="w-[46px] rounded border border-[#c6c6c6] bg-white [-webkit-text-stroke:0.3px_#000]">&lt;&lt;</div>
      <div className="ml-3.5 w-[60px] rounded border border-[#c6c6c6] bg-white leading-[15px]">Current</div>
      <div className="ml-3.5 w-[46px] rounded border border-[#858589] bg-gradient-to-b from-[#a5a5aa] to-[#8b8b90] [-webkit-text-stroke:0.3px_#000]">&gt;&gt;</div>
    </div>
  </div>
);

export default function App() {
  return (
    <div className="h-[957px] w-[1524px] overflow-hidden bg-white pt-[34px] pl-[42px] font-['Liberation_Sans',Arial,sans-serif]">
      <div className="relative flex h-[873px] w-[1440px] flex-col rounded-[5px] bg-[#ebebeb] shadow-[0_17px_42px_rgba(0,0,0,0.38),0_0_1px_rgba(0,0,0,0.5)]">
        <div className="flex h-[22px] shrink-0 items-center gap-2 rounded-t-[5px] border-b border-[#d0d0d0] bg-[#f6f6f6] pl-2">
          <span className="h-3 w-3 rounded-full border border-[#cecece] bg-[#dcdcdc]" />
          <span className="h-3 w-3 rounded-full border border-[#cecece] bg-[#dcdcdc]" />
          <span className="h-3 w-3 rounded-full border border-[#cecece] bg-[#dcdcdc]" />
          <span className="flex-1 pr-[69px] text-center text-[13px] tracking-[0.300px] text-[#a5a5a5]">QGIS 2.10.1-Pisa</span>
        </div>
        <MainBars />
        <div className="flex min-h-0 flex-1">
          <SideBar />
          <LayerPanel />
          <MapCanvas />
        </div>
        <StatusBar />
        <Navigate />
      </div>
    </div>
  );
}
